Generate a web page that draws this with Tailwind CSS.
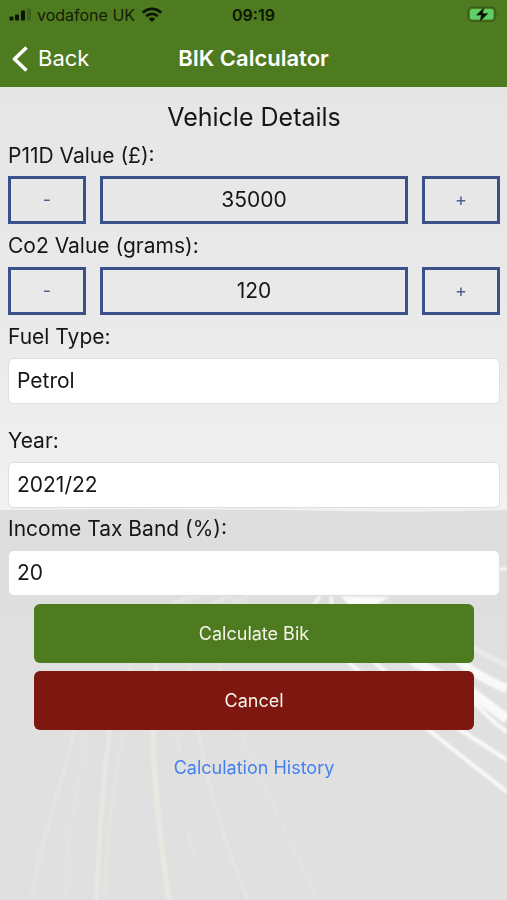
<!DOCTYPE html>
<html lang="en">
<head>
<meta charset="utf-8">
<meta name="viewport" content="width=device-width, initial-scale=1">
<title>BIK Calculator</title>
<script src="https://cdn.jsdelivr.net/npm/@tailwindcss/browser@4"></script>
</head>
<body class="flex min-h-screen flex-col bg-[#e0e0e0] font-['Inter','Liberation_Sans',sans-serif] text-[#161616]">
<header class="bg-[#4e7a20]">
  <div class="grid h-[30px] grid-cols-3 items-center px-2 text-base text-[#142004]">
    <div class="flex items-center gap-[6px] whitespace-nowrap">
      <svg class="h-[14px] w-[23px]" viewBox="0 0 23 14" aria-hidden="true">
        <rect x="1.500" y="8.500" width="4" height="4" rx="1" fill="#0c1503"/>
        <rect x="7" y="6.500" width="4" height="6" rx="1" fill="#0c1503"/>
        <rect x="13" y="2.500" width="4" height="10" rx="1" fill="#0c1503"/>
        <rect x="19" y="0.500" width="4" height="12" rx="1" fill="#3f641a"/>
      </svg>
      <span>vodafone UK</span>
      <svg class="h-4 w-[22px]" viewBox="0 0 22 16" fill="none" stroke="#0c1503" aria-hidden="true">
        <path d="M1.800 5.800C7 0.500 15 0.500 20.200 5.800" stroke-width="2.900"/>
        <path d="M5.200 9.300C8.600 6 13.400 6 16.800 9.300" stroke-width="2.800"/>
        <path d="M11 15L7.700 11.800C9.700 10.100 12.300 10.100 14.300 11.800Z" fill="#0c1503" stroke="none"/>
      </svg>
    </div>
    <time class="text-center font-semibold text-[#0c1503]">09:19</time>
    <svg class="h-[20px] w-[34px] justify-self-end" viewBox="0 0 34 20" role="img" aria-label="Battery charging">
      <rect x="3.200" y="2.200" width="27" height="14" rx="4" fill="none" stroke="#3b5c19" stroke-width="1.400"/>
      <rect x="5" y="4" width="23.500" height="10.500" rx="2.500" fill="#5fd068"/>
      <path d="M31.800 7.200q2 2 0 4z" fill="#3b5c19"/>
      <path d="M19.800 1.800L11 10.200H16.300L14.300 17.200L23.300 8.300H17.600Z" fill="#050a02" stroke="#4e7a20" stroke-width="0.500"/>
    </svg>
  </div>
  <nav class="grid h-[57px] grid-cols-[1fr_auto_1fr] items-center px-3 text-white">
    <a href="#" class="flex items-center gap-[10px] text-[22px]">
      <svg class="h-[26px] w-4" viewBox="0 0 16 26" fill="none" stroke="currentColor" stroke-width="3.600" stroke-linejoin="round" aria-hidden="true"><path d="M14.500 1.500L2.500 13L14.500 24.500"/></svg>
      Back
    </a>
    <h1 class="text-[22px] font-semibold">BIK Calculator</h1>
  </nav>
</header>

<main class="relative isolate flex flex-1 flex-col pt-3 pr-[7px] pl-2">
  <svg class="absolute inset-0 -z-10 h-full w-full" viewBox="0 0 507 813" preserveAspectRatio="none" fill="none" aria-hidden="true">
    <defs>
      <linearGradient id="sky" x2="0" y2="1"><stop stop-color="#e6e6e6"/><stop offset=".5" stop-color="#e9e9e9"/><stop offset="1" stop-color="#f1f1f1"/></linearGradient>
      <linearGradient id="ground" x2="0" y2="1"><stop stop-color="#dcdcdc"/><stop offset=".6" stop-color="#dedede"/><stop offset=".75" stop-color="#e0e0e0"/></linearGradient>
      <filter id="soft" x="-20%" y="-20%" width="140%" height="140%"><feGaussianBlur stdDeviation="0.8"/></filter>
    </defs>
    <rect width="507" height="813" fill="url(#ground)"/>
    <path d="M0 0H507V423Q420 426 340 424Q180 421 0 423Z" fill="url(#sky)"/>
    <g filter="url(#soft)">
      <g stroke="#e8e8e2">
        <path d="M74 643C62 700 38 760 32 813" stroke-width="4" opacity=".6"/>
        <path d="M88 643C76 710 64 760 66 813" stroke-width="3" opacity=".35"/>
        <path d="M110 643C100 710 100 760 96 813" stroke-width="4"/>
        <path d="M124 643C114 690 108 740 104 813" stroke-width="3" opacity=".5"/>
        <path d="M156 573L153 643C154 700 160 750 169 813" stroke-width="5"/>
        <path d="M198 643C208 700 226 760 248 813" stroke-width="2"/>
        <path d="M240 643C262 700 290 750 318 813" stroke-width="2" opacity=".6"/>
        <path d="M176 645L180 668M188 745L194 770" stroke-width="2" opacity=".7"/>
        <path d="M174 516Q192 508 210 508M212 516L232 509M232 516L248 509" stroke-width="3"/>
        <path d="M130 576V584M190 576V584M220 576V584" stroke-width="3"/>
      </g>
      <g stroke="#f9f9f9">
        <path d="M314 518L320 509M332 518L331 509" stroke-width="3"/>
        <path d="M343 510L386 511L374 518H350Z" fill="#fafafa" stroke-width="2"/>
        <path d="M348 575L360 585M374 575L386 585" stroke-width="4"/>
        <path d="M412 573L470 604L507 632" stroke-width="10"/>
        <path d="M458 573C476 588 490 594 507 602" stroke-width="9"/>
        <path d="M470 610Q486 630 507 645M456 640L507 673" stroke-width="4"/>
        <path d="M426 641L507 705" stroke-width="4"/>
        <path d="M470 559L507 579" stroke-width="5" opacity=".4"/>
        <path d="M497 482H507" stroke-width="3"/>
      </g>
    </g>
  </svg>

  <form class="flex flex-col">
    <h2 class="text-center text-[25px] leading-[36px]">Vehicle Details</h2>

    <label for="p11d" class="text-[21px] leading-[41px]">P11D Value (£):</label>
    <div class="flex h-12 gap-[14px] text-[21px]">
      <button type="button" aria-label="Decrease P11D value" class="w-[78px] border-3 border-[#3a5289] text-lg text-[#4c6192]">-</button>
      <input id="p11d" type="text" inputmode="numeric" value="35000" class="min-w-0 flex-1 border-3 border-[#3a5289] text-center">
      <button type="button" aria-label="Increase P11D value" class="w-[78px] border-3 border-[#3a5289] text-lg text-[#4c6192]">+</button>
    </div>

    <label for="co2" class="text-[21px] leading-[43px]">Co2 Value (grams):</label>
    <div class="flex h-12 gap-[14px] text-[21px]">
      <button type="button" aria-label="Decrease Co2 value" class="w-[78px] border-3 border-[#3a5289] text-lg text-[#4c6192]">-</button>
      <input id="co2" type="text" inputmode="numeric" value="120" class="min-w-0 flex-1 border-3 border-[#3a5289] text-center">
      <button type="button" aria-label="Increase Co2 value" class="w-[78px] border-3 border-[#3a5289] text-lg text-[#4c6192]">+</button>
    </div>

    <label for="fuel" class="text-[21px] leading-[43px]">Fuel Type:</label>
    <select id="fuel" class="mb-[15px] h-[46px] appearance-none rounded-md border border-[#dedede] bg-white px-2 text-[21px]"><option>Petrol</option></select>

    <label for="year" class="text-[21px] leading-[43px]">Year:</label>
    <select id="year" class="h-[46px] appearance-none rounded-md border border-[#dedede] bg-white px-2 text-[21px]"><option>2021/22</option></select>

    <label for="band" class="text-[21px] leading-[42px]">Income Tax Band (%):</label>
    <select id="band" class="h-[46px] appearance-none rounded-md border border-[#dedede] bg-white px-2 text-[21px]"><option>20</option></select>

    <div class="mt-2 flex flex-col gap-2 px-[26px] text-lg text-[#f4f4ea]">
      <button type="submit" class="h-[59px] rounded-md bg-[#4e7a20]">Calculate Bik</button>
      <button type="button" class="h-[59px] rounded-md bg-[#7e170f]">Cancel</button>
    </div>
  </form>
  <a href="#" class="mt-6 self-center text-lg text-[#4580ee]">Calculation History</a>
</main>
</body>
</html>
